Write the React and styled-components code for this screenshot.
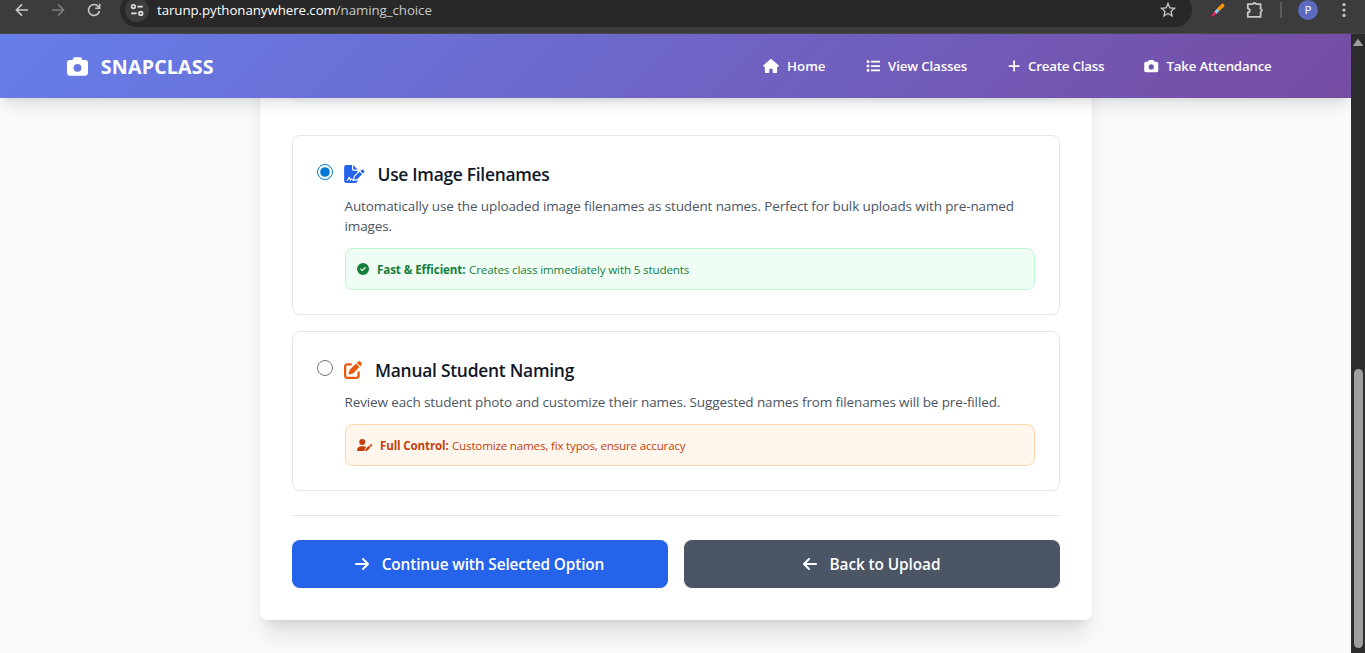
import React, { useState } from "react";
import styled, { createGlobalStyle } from "styled-components";
import {
  FaCamera, FaHouse, FaList, FaPlus, FaFileSignature, FaPenToSquare,
  FaCircleCheck, FaUserPen, FaArrowRight, FaArrowLeft,
} from "react-icons/fa6";

const Global = createGlobalStyle`
  * { box-sizing: border-box; }
  html, body { margin: 0; padding: 0; }
  body {
    font-family: "Open Sans", "Noto Sans", sans-serif;
    overflow: hidden;
    background: #f9fafb;
  }
  svg { display: block; flex: none; }
`;

const Window = styled.div`
  display: flex;
  flex-direction: column;
  width: 100%;
  height: 100vh;
  overflow: hidden;
`;

/* ---------- browser toolbar ---------- */
const Toolbar = styled.div`
  flex: none;
  display: flex;
  align-items: center;
  height: 34px;
  padding: 0 3px 14px 4px;
  background: #3c3c3c;
  border-bottom: 1px solid #484848;
  overflow: hidden;
`;

const Slot = styled.div`
  flex: none;
  display: flex;
  align-items: center;
  justify-content: center;
  width: ${(p) => p.$w || 36}px;
  height: 20px;
`;

const AddressBar = styled.div`
  flex: 1;
  display: flex;
  align-items: center;
  height: 34px;
  margin: 0 8px;
  padding: 0 15px 0 5px;
  border-radius: 17px;
  background: #282828;
`;

const SiteInfo = styled.div`
  display: flex;
  align-items: center;
  justify-content: center;
  width: 24px;
  height: 24px;
  margin-right: 8px;
  border-radius: 50%;
  background: #3c3c3c;
`;

const Url = styled.div`
  flex: 1;
  font-size: 13.3px;
  letter-spacing: -0.07px;
  line-height: 20px;
  color: #c7c7c7;
  white-space: nowrap;
  b { font-weight: 400; color: #ffffff; }
`;

const Separator = styled.div`
  width: 2px;
  height: 16px;
  background: #5c5c5c;
`;

const Avatar = styled.div`
  width: 20px;
  height: 20px;
  border-radius: 50%;
  background: #5c6bc0;
  color: #fff;
  font-size: 11.5px;
  line-height: 20px;
  text-align: center;
`;

/* ---------- viewport ---------- */
const Viewport = styled.div`
  flex: 1;
  display: flex;
  min-height: 0;
`;

const Page = styled.div`
  flex: 1;
  display: flex;
  flex-direction: column;
  min-width: 0;
  overflow: hidden;
  background: #f9fafb;
`;

const ScrollTrack = styled.div`
  flex: none;
  display: flex;
  flex-direction: column;
  align-items: center;
  justify-content: space-between;
  width: 14px;
  padding: 5px 0 5px;
  background: #2c2c2c;
`;

const ScrollThumb = styled.div`
  width: 9px;
  height: 279px;
  border-radius: 5px;
  background: #9f9f9f;
`;

/* ---------- site header ---------- */
const Header = styled.header`
  position: relative;
  z-index: 2;
  flex: none;
  height: 64px;
  background: linear-gradient(135deg, #667eea 0%, #764ba2 100%);
  box-shadow: 0 10px 15px -3px rgba(0, 0, 0, 0.1), 0 4px 6px -4px rgba(0, 0, 0, 0.1);
`;

const HeaderInner = styled.div`
  display: flex;
  align-items: center;
  justify-content: space-between;
  max-width: 1280px;
  height: 100%;
  margin: 0 auto;
  padding: 0 32px 0 31px;
  color: #fff;
`;

const Brand = styled.div`
  display: flex;
  align-items: center;
  gap: 13.3px;
  font-size: 19.6px;
  font-weight: 700;
`;

const Nav = styled.nav`
  display: flex;
  gap: 16px;
`;

const NavItem = styled.a`
  display: flex;
  align-items: center;
  gap: 8px;
  padding: 8px 12px;
  font-size: 13.3px;
  font-weight: 600;
  line-height: 20px;
  white-space: nowrap;
  svg {
    width: ${(p) => p.$icon || 14}px;
    height: 14px;
  }
`;

const Label = styled.span`
  display: block;
  width: ${(p) => (p.$w ? p.$w + "px" : "auto")};
  letter-spacing: ${(p) => p.$ls || 0}px;
  white-space: nowrap;
`;

/* ---------- content ---------- */
const Main = styled.main`
  flex: 1;
  min-height: 0;
  overflow: hidden;
`;

const Card = styled.section`
  max-width: 832px;
  margin: -40px auto 0;
  padding: 0 32px 32px;
  border-radius: 8px;
  background: #fff;
  box-shadow: 0 20px 25px -5px rgba(0, 0, 0, 0.1), 0 8px 10px -6px rgba(0, 0, 0, 0.1);
`;

const SummaryPanel = styled.div`
  height: 45px;
  margin-bottom: 32px;
  border-radius: 8px;
  background: #f9fafb;
`;

const OptionList = styled.div`
  display: flex;
  flex-direction: column;
  gap: 16px;
`;

const Option = styled.label`
  display: flex;
  align-items: flex-start;
  gap: 12px;
  padding: 24px;
  border: 1px solid #e5e7eb;
  border-radius: 8px;
`;

const Radio = styled.input`
  flex: none;
  width: 16px;
  height: 16px;
  margin: 4px 0 0;
  accent-color: #0078d7;
`;

const OptionBody = styled.div`
  flex: 1;
  min-width: 0;
`;

const OptionTitle = styled.div`
  display: flex;
  align-items: center;
  gap: 13px;
  height: 28px;
  font-size: 17.4px;
  line-height: 28px;
  font-weight: 600;
  color: #111827;
  svg {
    width: ${(p) => p.$icon}px;
    height: 18px;
    margin-left: -0.5px;
    color: ${(p) => p.$color};
  }
`;

const Description = styled.p`
  margin: 8px 0 0;
  font-size: 13.5px;
  line-height: 20px;
  letter-spacing: -0.12px;
  color: #4b5563;
`;

const tones = {
  green: { bg: "#f0fdf4", line: "#bbf7d0", text: "#15803d" },
  orange: { bg: "#fff7ed", line: "#fed7aa", text: "#c2410c" },
};

const Hint = styled.div`
  display: flex;
  align-items: center;
  gap: 8px;
  height: 42px;
  margin-top: 12px;
  padding: 0 11.5px;
  border: 1px solid ${(p) => tones[p.$tone].line};
  border-radius: 8px;
  background: ${(p) => tones[p.$tone].bg};
  color: ${(p) => tones[p.$tone].text};
  font-size: 11.6px;
  line-height: 16px;
  svg {
    width: ${(p) => p.$icon}px;
    height: 12px;
  }
`;

const HintText = styled.div`
  display: flex;
  gap: 3px;
  padding-top: 2px;
`;

const Strong = styled(Label)`
  font-weight: 700;
`;

const Actions = styled.div`
  display: grid;
  grid-template-columns: 1fr 1fr;
  gap: 16px;
  margin-top: 24px;
  padding-top: 24px;
  border-top: 1px solid #e5e7eb;
`;

const Button = styled.button`
  display: flex;
  align-items: center;
  justify-content: center;
  gap: 11px;
  height: 48px;
  border: 0;
  border-radius: 8px;
  background: ${(p) => (p.$primary ? "#2563eb" : "#4b5563")};
  color: #fff;
  font-family: inherit;
  font-size: 15.4px;
  font-weight: 600;
`;

const Stroke = ({ size = 16, color = "#c7c7c7", children }) => (
  <svg width={size} height={size} viewBox="0 0 16 16" fill="none" stroke={color} strokeWidth="1.6">
    {children}
  </svg>
);

function BrowserToolbar() {
  return (
    <Toolbar>
      <Slot><Stroke><path d="M14 8H2.6M8 2.4 2.4 8 8 13.6" /></Stroke></Slot>
      <Slot><Stroke color="#7c7c7c"><path d="M2 8h11.4M8 2.4 13.6 8 8 13.6" /></Stroke></Slot>
      <Slot>
        <Stroke>
          <path d="M13.4 9A5.5 5.5 0 1 1 12.2 4.4L13.4 5.8" />
          <path d="M13.6 1.8v4.4H9.2" />
        </Stroke>
      </Slot>
      <AddressBar>
        <SiteInfo>
          <Stroke color="#e3e3e3">
            <circle cx="4.4" cy="4.6" r="1.8" />
            <path d="M8.4 4.6h5.4M2.2 11.4h5.4" />
            <circle cx="11.8" cy="11.4" r="1.8" />
          </Stroke>
        </SiteInfo>
        <Url><b>tarunp.pythonanywhere.com</b>/naming_choice</Url>
        <svg width="18" height="18" viewBox="1 1 22 22" fill="#c7c7c7">
          <path d="m22 9.24-7.19-.62L12 2 9.19 8.63 2 9.24l5.46 4.73L5.82 21 12 17.27 18.18 21l-1.63-7.03L22 9.24zM12 15.4l-3.76 2.27 1-4.28-3.32-2.88 4.38-.38L12 6.1l1.71 4.04 4.38.38-3.32 2.88 1 4.28L12 15.4z" />
        </svg>
      </AddressBar>
      <Slot>
        <svg width="14" height="14" viewBox="0 0 14 14">
          <path d="M1.2 12.8 L4 8.8 L5.4 10.2 Z" fill="#e91e63" stroke="#e91e63" strokeWidth="1.4" strokeLinejoin="round" />
          <path d="M4.4 9.6 L8.6 5.4" stroke="#90caf9" strokeWidth="3" />
          <path d="M8.4 5.6 L11.6 2.4" stroke="#ff9800" strokeWidth="3.6" strokeLinecap="round" />
        </svg>
      </Slot>
      <Slot>
        <svg width="20" height="18" viewBox="0 0 20 18" fill="none" stroke="#c7c7c7" strokeWidth="1.8" strokeLinejoin="round">
          <path d="M3.8 3.2h5a1.8 1.8 0 0 1 3.4 0h4.4v4.6a1.8 1.8 0 0 1 0 3.4v4.7H3.8v-4.4a2 2 0 0 0 0-4z" />
        </svg>
      </Slot>
      <Slot $w={18}><Separator /></Slot>
      <Slot><Avatar>P</Avatar></Slot>
      <Slot>
        <svg width="4" height="16" viewBox="0 0 4 16" fill="#c7c7c7">
          <circle cx="2" cy="2.6" r="1.6" /><circle cx="2" cy="8" r="1.6" /><circle cx="2" cy="13.4" r="1.6" />
        </svg>
      </Slot>
    </Toolbar>
  );
}

export default function App() {
  const [choice, setChoice] = useState("filenames");
  return (
    <Window>
      <Global />
      <BrowserToolbar />
      <Viewport>
        <Page>
          <Header>
            <HeaderInner>
              <Brand><FaCamera size={21} /><Label $ls={0.2}>SNAPCLASS</Label></Brand>
              <Nav>
                <NavItem $icon={16}><FaHouse /><Label $w={38.5}>Home</Label></NavItem>
                <NavItem $icon={14.5}><FaList /><Label $w={79.7} $ls={-0.15}>View Classes</Label></NavItem>
                <NavItem $icon={12.25}><FaPlus /><Label $w={76} $ls={-0.2}>Create Class</Label></NavItem>
                <NavItem $icon={14.5}><FaCamera /><Label $w={105} $ls={-0.2}>Take Attendance</Label></NavItem>
              </Nav>
            </HeaderInner>
          </Header>
          <Main>
            <Card>
              <SummaryPanel />
              <OptionList>
                <Option>
                  <Radio type="radio" name="naming" checked={choice === "filenames"} onChange={() => setChoice("filenames")} />
                  <OptionBody>
                    <OptionTitle $icon={20.5} $color="#2563eb">
                      <FaFileSignature />
                      <Label $ls={-0.28}>Use Image Filenames</Label>
                    </OptionTitle>
                    <Description>
                      Automatically use the uploaded image filenames as student names. Perfect for bulk uploads with pre-named images.
                    </Description>
                    <Hint $tone="green" $icon={12}>
                      <FaCircleCheck />
                      <HintText>
                        <Strong $w={89} $ls={-0.1}>Fast &amp; Efficient:</Strong>
                        <Label $ls={-0.14}>Creates class immediately with 5 students</Label>
                      </HintText>
                    </Hint>
                  </OptionBody>
                </Option>
                <Option>
                  <Radio type="radio" name="naming" checked={choice === "manual"} onChange={() => setChoice("manual")} />
                  <OptionBody>
                    <OptionTitle $icon={18} $color="#ea580c">
                      <FaPenToSquare />
                      <Label $ls={-0.25}>Manual Student Naming</Label>
                    </OptionTitle>
                    <Description>
                      Review each student photo and customize their names. Suggested names from filenames will be pre-filled.
                    </Description>
                    <Hint $tone="orange" $icon={15}>
                      <FaUserPen />
                      <HintText>
                        <Strong $w={69} $ls={-0.15}>Full Control:</Strong>
                        <Label $ls={-0.18}>Customize names, fix typos, ensure accuracy</Label>
                      </HintText>
                    </Hint>
                  </OptionBody>
                </Option>
              </OptionList>
              <Actions>
                <Button $primary><FaArrowRight size={16} /><Label $w={223.5} $ls={-0.13}>Continue with Selected Option</Label></Button>
                <Button><FaArrowLeft size={16} /><Label $w={111.5} $ls={-0.1}>Back to Upload</Label></Button>
              </Actions>
            </Card>
          </Main>
        </Page>
        <ScrollTrack>
          <svg width="10" height="8" viewBox="0 0 10 8"><path d="M5 .8 9 6.4H1z" fill="#9f9f9f" stroke="#9f9f9f" strokeWidth="1.4" strokeLinejoin="round" /></svg>
          <ScrollThumb />
        </ScrollTrack>
      </Viewport>
    </Window>
  );
}
